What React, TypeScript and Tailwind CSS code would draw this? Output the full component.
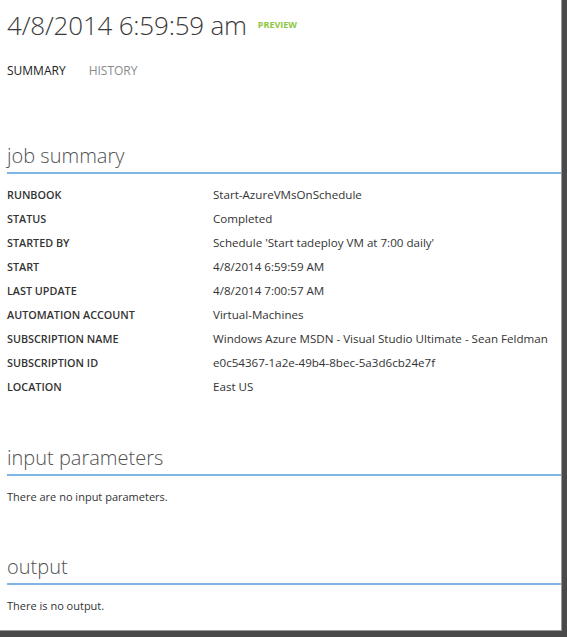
const SUMMARY_ROWS = [
  { label: "Runbook", value: "Start-AzureVMsOnSchedule" },
  { label: "Status", value: "Completed" },
  { label: "Started by", value: "Schedule 'Start tadeploy VM at 7:00 daily'" },
  { label: "Start", value: "4/8/2014 6:59:59 AM" },
  { label: "Last update", value: "4/8/2014 7:00:57 AM" },
  { label: "Automation account", value: "Virtual-Machines" },
  { label: "Subscription name", value: "Windows Azure MSDN - Visual Studio Ultimate - Sean Feldman" },
  { label: "Subscription ID", value: "e0c54367-1a2e-49b4-8bec-5a3d6cb24e7f" },
  { label: "Location", value: "East US" },
] as const;

function SectionHeading({ title }: { title: string }) {
  return (
    <div className="border-b-2 border-[#80b4e2] pb-[3px]">
      <h2 className="text-[20px] font-light leading-[26px] text-[#505050]">{title}</h2>
    </div>
  );
}

function Tabs() {
  return (
    <nav className="flex gap-[23px] text-[12px] uppercase leading-none">
      <span className="text-[#222]">Summary</span>
      <span className="text-[#8a8a8a]">History</span>
    </nav>
  );
}

export default function App() {
  return (
    <div className="w-[567px] h-[637px] bg-[#4a4a4a] pr-[5px] pb-[6px] font-['Open_Sans',sans-serif]">
      <div className="h-full bg-white border-r border-b border-[#9a9a9a] pl-[7px] overflow-hidden">
        <header className="flex items-start gap-[11px] pt-[5px]">
          <h1 className="text-[26px] font-light leading-[40px] tracking-[-0.2px] text-[#3a3a3a]">
            4/8/2014 6:59:59 am
          </h1>
          <span className="mt-[15px] text-[9px] font-bold uppercase leading-none text-[#8cc63f]">
            Preview
          </span>
        </header>

        <div className="mt-[20px]">
          <Tabs />
        </div>

        <section className="mt-[66px]">
          <SectionHeading title="job summary" />
          <dl className="mt-[9px] flex flex-col">
            {SUMMARY_ROWS.map((row) => (
              <div key={row.label} className="flex h-[24px] items-center">
                <dt className="w-[206px] shrink-0 text-[10.8px] font-semibold uppercase text-[#333]">
                  {row.label}
                </dt>
                <dd className="text-[11.6px] text-[#333] whitespace-nowrap">{row.value}</dd>
              </div>
            ))}
          </dl>
        </section>

        <section className="mt-[46px]">
          <SectionHeading title="input parameters" />
          <p className="mt-[13px] text-[11px] text-[#333]">There are no input parameters.</p>
        </section>

        <section className="mt-[48px]">
          <SectionHeading title="output" />
          <p className="mt-[13px] text-[11px] text-[#333]">There is no output.</p>
        </section>
      </div>
    </div>
  );
}
